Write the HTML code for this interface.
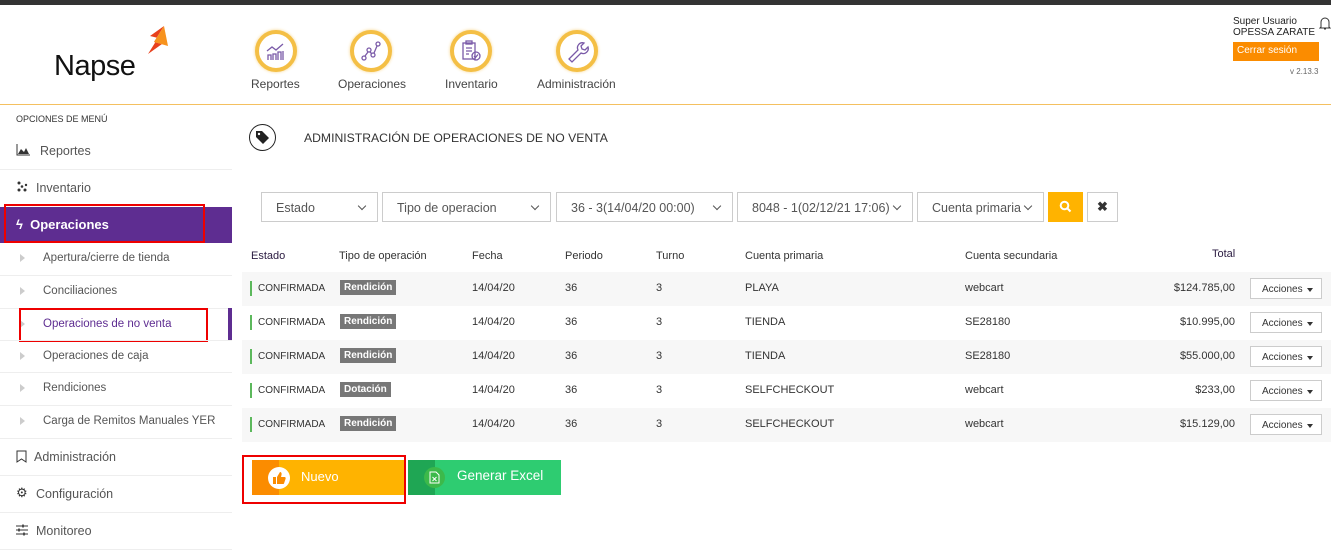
<!DOCTYPE html>
<html><head><meta charset="utf-8"><style>
*{box-sizing:border-box;margin:0;padding:0}
body{width:1331px;height:554px;position:relative;overflow:hidden;background:#fff;font-family:"Liberation Sans",sans-serif;color:#333}
.a{position:absolute;white-space:nowrap}
.circ{position:absolute;width:42px;height:42px;border-radius:50%;border:4px solid #f4bf45;box-shadow:0 0 3px #f7d58a;background:#fff}
.nav{font-size:12px;color:#444;top:77px}
.side{font-size:12.5px;color:#555}
.sep{position:absolute;left:0;width:232px;height:1px;background:#eee}
.sub{font-size:11.5px;color:#555;left:43px}
.tri{position:absolute;left:20px;width:0;height:0;border-left:5px solid #ccc;border-top:4px solid transparent;border-bottom:4px solid transparent}
.sel{position:absolute;top:192px;height:30px;border:1px solid #ccc;font-size:12.5px;color:#555;padding:8px 0 0 14px}
.sel:after{content:"";position:absolute;right:12px;top:10px;width:5px;height:5px;border-right:1.5px solid #555;border-bottom:1.5px solid #555;transform:rotate(45deg)}
.row{position:absolute;left:242px;width:1089px;height:34px;font-size:11px;color:#333}
.row.g{background:#f7f7f7}
.row span{position:absolute;top:10px}
.bar{position:absolute;left:8px;top:9px;width:2px;height:15px;background:#5cb85c}
.tag{background:#777;color:#fff;font-size:10px;padding:2px 4px;top:8px!important;font-weight:bold}
.acc{position:absolute;left:1008px;top:6px;width:72px;height:21px;border:1px solid #ccc;background:#fff;font-size:10px;padding:5px 0 0 11px}
.acc:after{content:"";position:absolute;right:8px;top:9px;border-top:4px solid #333;border-left:3.5px solid transparent;border-right:3.5px solid transparent}
.th{font-size:11px;color:#333;top:250px}
</style></head><body>
<div class="a" style="left:0;top:0;width:1331px;height:5px;background:#333"></div>
<div class="a" style="left:54px;top:50px;font-size:29px;color:#111;letter-spacing:-0.5px">Napse</div>
<svg class="a" style="left:140px;top:24px" width="32" height="32" viewBox="0 0 32 32"><path d="M24 2 L14 18 L22 20 L8 30 L18 14 L10 12 Z" fill="#e8401c"/><path d="M24 2 L14 18 L28 22 Z" fill="#f7931e"/></svg>
<div class="circ" style="left:255px;top:30px"></div>
<svg class="a" style="left:264px;top:39px" width="24" height="24" viewBox="0 0 24 24" fill="none" stroke="#7a5aa8" stroke-width="1.3"><path d="M3 12l5-4 4 3 7-6"/><path d="M4 21v-5h3v5M9 21v-6h3v6M14 21v-8h3v8M19 21v-9"/></svg>
<div class="circ" style="left:350px;top:30px"></div>
<svg class="a" style="left:359px;top:39px" width="24" height="24" viewBox="0 0 24 24" fill="none" stroke="#7a5aa8" stroke-width="1.3"><circle cx="5" cy="19" r="2"/><circle cx="10" cy="11" r="2"/><circle cx="14" cy="16" r="2"/><circle cx="19" cy="5" r="2"/><path d="M6 17l3-4M11 13l2 2M15 14l3-7"/></svg>
<div class="circ" style="left:450px;top:30px"></div>
<svg class="a" style="left:459px;top:39px" width="24" height="24" viewBox="0 0 24 24" fill="none" stroke="#7a5aa8" stroke-width="1.3"><rect x="4" y="4" width="12" height="16"/><rect x="7" y="2" width="6" height="3"/><path d="M7 9h6M7 12h6M7 15h3"/><circle cx="17" cy="17" r="4"/><path d="M15 17l1.5 1.5 2.5-3"/></svg>
<div class="circ" style="left:556px;top:30px"></div>
<svg class="a" style="left:565px;top:39px" width="24" height="24" viewBox="0 0 24 24" fill="none" stroke="#7a5aa8" stroke-width="1.3"><path d="M4 20l9-9a5 5 0 0 1 6-7l-3 3 1 3 3 1 3-3a5 5 0 0 1-7 6l-9 9z"/></svg>
<div class="a nav" style="left:251px">Reportes</div>
<div class="a nav" style="left:338px">Operaciones</div>
<div class="a nav" style="left:445px">Inventario</div>
<div class="a nav" style="left:537px">Administración</div>
<div class="a" style="left:1233px;top:16px;font-size:10px;color:#222;line-height:11px">Super Usuario<br>OPESSA ZARATE</div>
<svg class="a" style="left:1319px;top:16px" width="12" height="14" viewBox="0 0 12 14" fill="none" stroke="#333" stroke-width="1"><path d="M2 11V6a4 4 0 0 1 8 0v5l1 1H1z"/><path d="M5 13h2"/></svg>
<div class="a" style="left:1233px;top:42px;width:86px;height:19px;background:#fb8c00;color:#fff;font-size:10px;padding:3px 0 0 4px">Cerrar sesión</div>
<div class="a" style="left:1290px;top:67px;font-size:8px;color:#666">v 2.13.3</div>
<div class="a" style="left:0;top:104px;width:1331px;height:1px;background:#f4c060"></div>
<div class="a" style="left:16px;top:114px;font-size:9px;color:#333">OPCIONES DE MENÚ</div>
<svg class="a" style="left:16px;top:144px" width="14" height="12" viewBox="0 0 14 12"><path d="M1 0v11h13" stroke="#333" fill="none"/><path d="M2 10l3-5 3 3 2-4 3 6z" fill="#333"/></svg>
<div class="a side" style="left:40px;top:144px">Reportes</div>
<div class="sep" style="top:169px"></div>
<svg class="a" style="left:16px;top:181px" width="12" height="12" viewBox="0 0 12 12" fill="#333"><circle cx="3" cy="2" r="1.5"/><circle cx="3" cy="9" r="1.5"/><circle cx="9" cy="9" r="1.5"/><circle cx="6" cy="5.5" r="1.3"/><circle cx="10" cy="4" r="1.2"/></svg>
<div class="a side" style="left:36px;top:181px">Inventario</div>
<div class="a" style="left:0;top:207px;width:232px;height:36px;background:#5e2d91"></div>
<div class="a" style="left:16px;top:217px;color:#fff;font-size:13px;font-weight:bold">ϟ&nbsp; Operaciones</div>
<div class="a" style="left:4px;top:204px;width:201px;height:39px;border:2px solid #e00"></div>
<div class="tri" style="top:254px"></div><div class="a sub" style="top:252px">Apertura/cierre de tienda</div>
<div class="sep" style="top:275px"></div>
<div class="tri" style="top:287px"></div><div class="a sub" style="top:285px">Conciliaciones</div>
<div class="sep" style="top:308px"></div>
<div class="tri" style="top:320px"></div><div class="a sub" style="top:318px;color:#5e2d91">Operaciones de no venta</div>
<div class="a" style="left:228px;top:308px;width:4px;height:32px;background:#5e2d91"></div>
<div class="a" style="left:19px;top:308px;width:189px;height:34px;border:2px solid #e00"></div>
<div class="sep" style="top:340px"></div>
<div class="tri" style="top:352px"></div><div class="a sub" style="top:350px">Operaciones de caja</div>
<div class="sep" style="top:372px"></div>
<div class="tri" style="top:384px"></div><div class="a sub" style="top:382px">Rendiciones</div>
<div class="sep" style="top:405px"></div>
<div class="tri" style="top:417px"></div><div class="a sub" style="top:415px">Carga de Remitos Manuales YER</div>
<div class="sep" style="top:438px"></div>
<svg class="a" style="left:16px;top:450px" width="11" height="13" viewBox="0 0 11 13"><path d="M1 1h9v11l-4.5-3-4.5 3z" fill="none" stroke="#333"/></svg>
<div class="a side" style="left:34px;top:450px">Administración</div>
<div class="sep" style="top:475px"></div>
<div class="a" style="left:16px;top:485px;font-size:13px;color:#333">⚙</div>
<div class="a side" style="left:36px;top:487px">Configuración</div>
<div class="sep" style="top:512px"></div>
<svg class="a" style="left:16px;top:524px" width="12" height="12" viewBox="0 0 12 12" stroke="#333" fill="none"><path d="M0 2h12M0 6h12M0 10h12"/><path d="M7 0.5v3M3 4.5v3M8 8.5v3" stroke-width="1.5"/></svg>
<div class="a side" style="left:36px;top:524px">Monitoreo</div>
<div class="sep" style="top:549px"></div>
<div class="a" style="left:249px;top:124px;width:27px;height:27px;border:1.5px solid #222;border-radius:50%"></div>
<svg class="a" style="left:255px;top:130px" width="15" height="15" viewBox="0 0 15 15"><path d="M1 1h6l7 7-6 6-7-7z" fill="#222"/><circle cx="4" cy="4" r="1.2" fill="#fff"/></svg>
<div class="a" style="left:304px;top:131px;font-size:12.2px;color:#333">ADMINISTRACIÓN DE OPERACIONES DE NO VENTA</div>
<div class="sel" style="left:261px;width:117px">Estado</div>
<div class="sel" style="left:382px;width:169px">Tipo de operacion</div>
<div class="sel" style="left:556px;width:177px">36 - 3(14/04/20 00:00)</div>
<div class="sel" style="left:737px;width:176px">8048 - 1(02/12/21 17:06)</div>
<div class="sel" style="left:917px;width:127px">Cuenta primaria</div>
<div class="a" style="left:1048px;top:192px;width:35px;height:30px;background:#ffb300"></div>
<svg class="a" style="left:1059px;top:200px" width="13" height="13" viewBox="0 0 13 13" stroke="#fff" stroke-width="2" fill="none"><circle cx="5.5" cy="5.5" r="3.8"/><path d="M8.5 8.5l3 3"/></svg>
<div class="a" style="left:1087px;top:192px;width:31px;height:30px;border:1px solid #ccc;text-align:center;font-size:13px;padding-top:6px;font-weight:bold;color:#333">✖</div>
<div class="a th" style="left:251px;color:#2a1a40">Estado</div>
<div class="a th" style="left:339px">Tipo de operación</div>
<div class="a th" style="left:472px">Fecha</div>
<div class="a th" style="left:565px">Periodo</div>
<div class="a th" style="left:656px">Turno</div>
<div class="a th" style="left:745px">Cuenta primaria</div>
<div class="a th" style="left:965px">Cuenta secundaria</div>
<div class="a th" style="left:1212px;top:248px;color:#2a1a40">Total</div>

<div class="row g" style="top:272px"><div class="bar"></div><span style="left:16px;font-size:10px;top:11px">CONFIRMADA</span><span class="tag" style="left:98px">Rendición</span><span style="left:230px">14/04/20</span><span style="left:323px">36</span><span style="left:414px">3</span><span style="left:503px">PLAYA</span><span style="left:723px">webcart</span><span style="right:96px">$124.785,00</span><div class="acc">Acciones</div></div>
<div class="row" style="top:306px"><div class="bar"></div><span style="left:16px;font-size:10px;top:11px">CONFIRMADA</span><span class="tag" style="left:98px">Rendición</span><span style="left:230px">14/04/20</span><span style="left:323px">36</span><span style="left:414px">3</span><span style="left:503px">TIENDA</span><span style="left:723px">SE28180</span><span style="right:96px">$10.995,00</span><div class="acc">Acciones</div></div>
<div class="row g" style="top:340px"><div class="bar"></div><span style="left:16px;font-size:10px;top:11px">CONFIRMADA</span><span class="tag" style="left:98px">Rendición</span><span style="left:230px">14/04/20</span><span style="left:323px">36</span><span style="left:414px">3</span><span style="left:503px">TIENDA</span><span style="left:723px">SE28180</span><span style="right:96px">$55.000,00</span><div class="acc">Acciones</div></div>
<div class="row" style="top:374px"><div class="bar"></div><span style="left:16px;font-size:10px;top:11px">CONFIRMADA</span><span class="tag" style="left:98px">Dotación</span><span style="left:230px">14/04/20</span><span style="left:323px">36</span><span style="left:414px">3</span><span style="left:503px">SELFCHECKOUT</span><span style="left:723px">webcart</span><span style="right:96px">$233,00</span><div class="acc">Acciones</div></div>
<div class="row g" style="top:408px"><div class="bar"></div><span style="left:16px;font-size:10px;top:11px">CONFIRMADA</span><span class="tag" style="left:98px">Rendición</span><span style="left:230px">14/04/20</span><span style="left:323px">36</span><span style="left:414px">3</span><span style="left:503px">SELFCHECKOUT</span><span style="left:723px">webcart</span><span style="right:96px">$15.129,00</span><div class="acc">Acciones</div></div>

<div class="a" style="left:252px;top:460px;width:152px;height:35px;background:#ffb300"></div>
<div class="a" style="left:252px;top:460px;width:27px;height:35px;background:#fb8c00"></div>
<div class="a" style="left:268px;top:467px;width:22px;height:22px;border-radius:50%;background:#fff"></div>
<svg class="a" style="left:272px;top:471px" width="14" height="14" viewBox="0 0 14 14" fill="#fb8c00"><rect x="1" y="6" width="3" height="7"/><path d="M5 6l3-5c1 0 2 1 1.5 3L9 6h3.5c1 0 1.5 1 1 2l-1.5 4.5c-.3.5-.7.5-1 .5H5z"/></svg>
<div class="a" style="left:301px;top:469px;color:#fff;font-size:13px">Nuevo</div>
<div class="a" style="left:242px;top:455px;width:164px;height:49px;border:2px solid #e00"></div>
<div class="a" style="left:408px;top:460px;width:153px;height:35px;background:#2ecc71"></div>
<div class="a" style="left:408px;top:460px;width:27px;height:35px;background:#1fa654"></div>
<div class="a" style="left:424px;top:467px;width:21px;height:21px;border-radius:50%;background:#3cb94a"></div>
<svg class="a" style="left:429px;top:471px" width="11" height="13" viewBox="0 0 11 13" fill="none" stroke="#fff"><path d="M1 1h6l3 3v8H1z"/><path d="M3.5 6l4 4M7.5 6l-4 4"/></svg>
<div class="a" style="left:457px;top:468px;color:#fff;font-size:13.5px">Generar Excel</div>
</body></html>
